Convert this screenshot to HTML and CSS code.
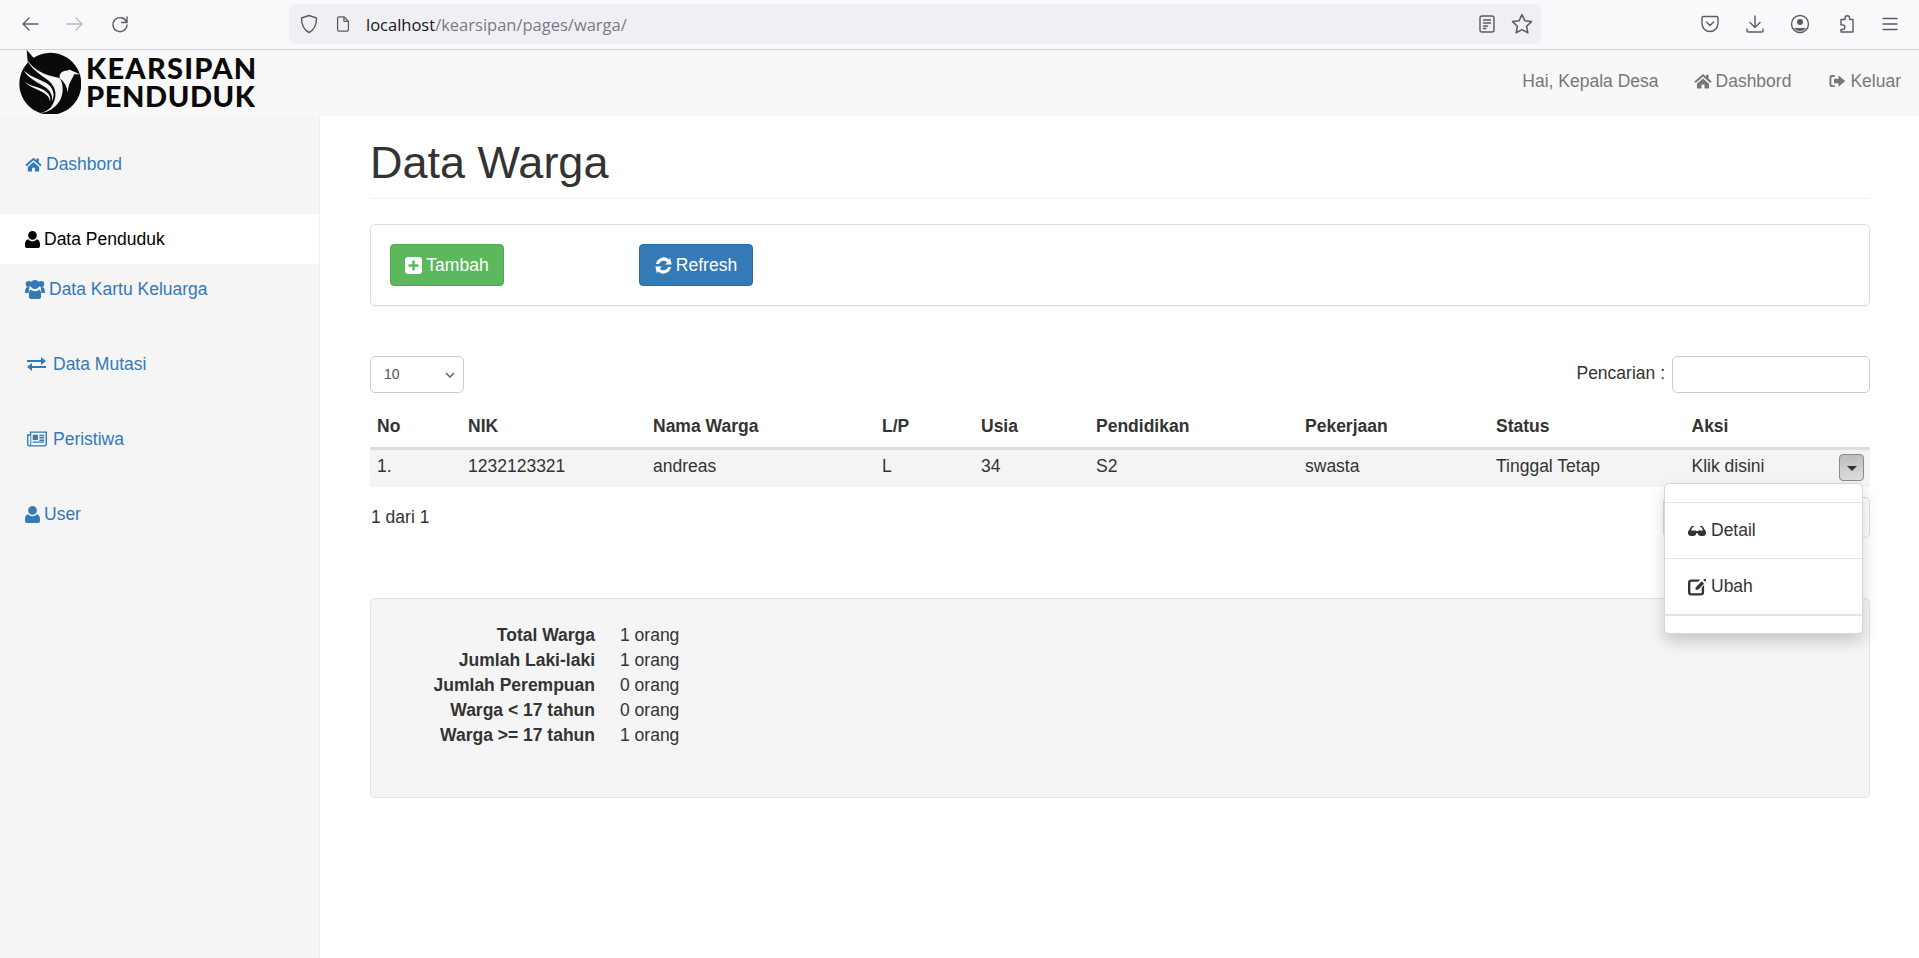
FILE: index.html
```html
<!DOCTYPE html>
<html lang="id">
<head>
<meta charset="utf-8">
<title>Data Warga</title>
<link rel="stylesheet" href="styles.css">
</head>
<body>
<div class="chrome">
  <div class="nav-btns">
    <svg class="ci" viewBox="0 0 20 20"><path d="M18 10H3M9 4l-6 6 6 6"/></svg>
    <svg class="ci dim" viewBox="0 0 20 20"><path d="M2 10h15M11 4l6 6-6 6"/></svg>
    <svg class="ci" viewBox="0 0 20 20"><path d="M16.500 8A7 7 0 1 0 17 11M17 3v5.500h-5.500"/></svg>
  </div>
  <div class="urlbar">
    <svg class="ci shield" viewBox="0 0 20 20"><path d="M10 1.500l7.500 2.500c0 7-1.500 11.500-7.500 14.500C4 15.500 2.500 11 2.500 4z"/></svg>
    <svg class="ci pageic" viewBox="0 0 20 20"><path d="M4 3.500A1.500 1.500 0 0 1 5.500 2H11l5 5v9.500a1.500 1.500 0 0 1-1.500 1.500h-9A1.500 1.500 0 0 1 4 16.500zM11 2v5h5"/></svg>
    <div class="url"><span class="host">localhost</span>/kearsipan/pages/warga/</div>
    <svg class="ci reader" viewBox="0 0 20 20"><rect x="3" y="2" width="14" height="16" rx="2"/><path d="M6.500 6h7M6.500 9h7M6.500 12h4M6.500 14.500h2.500"/></svg>
    <svg class="ci star" viewBox="0 0 20 20"><path d="M10 1.500l2.600 5.500 6 .8-4.400 4.200 1.100 6L10 15.100 4.700 18l1.100-6L1.400 7.800l6-.8z"/></svg>
  </div>
  <div class="tools">
    <svg class="ci" viewBox="0 0 20 20"><path d="M3.500 2.500h13A1.500 1.500 0 0 1 18 4v5.500a8 8 0 0 1-16 0V4a1.500 1.500 0 0 1 1.500-1.500zM6.500 8l3.500 3.500L13.500 8"/></svg>
    <svg class="ci" viewBox="0 0 20 20"><path d="M10 2v11M5 8.500l5 5 5-5M2 15v2a1 1 0 0 0 1 1h14a1 1 0 0 0 1-1v-2"/></svg>
    <svg class="ci" viewBox="0 0 20 20"><circle cx="10" cy="10" r="8.500"/><circle class="fill" cx="10" cy="8" r="3"/><path class="fill" d="M4 14h12a7.500 7.500 0 0 1-12 0z"/></svg>
    <svg class="ci" viewBox="0 0 20 20"><path d="M10 5.500V4a2.300 2.300 0 0 1 4.600 0v1.500H18V18H6v-2.500h1.500a2.300 2.300 0 0 0 0-4.600H6V5.500z"/></svg>
    <svg class="ci" viewBox="0 0 20 20"><path d="M3 4.500h14M3 10h14M3 15.500h14"/></svg>
  </div>
</div>

<header class="navbar">
  <div class="brand">
    <svg class="logo" viewBox="0 0 64 66">
      <path class="k" d="M8 0L15 8A32 32 0 1 1 9 13z"/>
      <path class="w" d="M8 9C12 20 22 25 31 32c8 7 9 17 2 27-3 3-7 5-11 6 13-1 24-12 23-26 0-4-1-7-3-10C34 27 16 24 8 9z"/>
      <path class="w" d="M5 21c5 9 15 12 23 18 5 4 7 9 6 14 3-6 2-12-3-17C24 30 13 29 5 21z"/>
      <path class="w" d="M6 33c6 6 15 8 21 12 4 3 5 6 5 9 1-4 0-8-4-11-6-5-15-5-22-10z"/>
      <path class="w" d="M42 29c-1-5 3-8 8-8 2-1 3-1 4 0l9 4-6 0c-1 3-3 5-4 8-2 3-2 7-3 11 0-6-3-11-8-15z"/>
    </svg>
    <div class="brand-text"><span class="line-a">KEARSIPAN</span><span class="line-b">PENDUDUK</span></div>
  </div>
  <nav class="topnav">
    <span class="hai">Hai, Kepala Desa</span>
    <a class="toplink dash">
      <svg class="ic w18" viewBox="0 0 24 24"><path d="M12 2.500L.5 12.500l1.800 2L12 6l9.700 8.500 1.800-2-4-3.500V3.500h-3.500V6zM4 15.500V22h6v-5.500h4V22h6v-6.500L12 8.500z"/></svg>Dashbord</a>
    <a class="toplink">
      <svg class="ic w18" viewBox="0 0 24 24"><path d="M9 4H5a3 3 0 0 0-3 3v10a3 3 0 0 0 3 3h4v-2.500H5.500a1 1 0 0 1-1-1v-9a1 1 0 0 1 1-1H9zM14 4.500L23 12l-9 7.500V15H8V9h6z"/></svg>Keluar</a>
  </nav>
</header>

<div class="layout">
  <aside class="sidebar">
    <a class="side-item gap">
      <svg class="ic w17" viewBox="0 0 24 24"><path d="M12 2.500L.5 12.500l1.800 2L12 6l9.700 8.500 1.800-2-4-3.500V3.500h-3.500V6zM4 15.500V22h6v-5.500h4V22h6v-6.500L12 8.500z"/></svg>Dashbord</a>
    <a class="side-item active">
      <svg class="ic p15" viewBox="0 0 16 18"><path d="M8 0a4.600 4.600 0 1 0 0 9.200A4.600 4.600 0 0 0 8 0zM3.600 8.600C1.300 8.800 0 10.800 0 14v2a2 2 0 0 0 2 2h12a2 2 0 0 0 2-2v-2c0-3.200-1.300-5.200-3.600-5.400C11.300 10 9.700 10.800 8 10.800s-3.300-.8-4.400-2.200z"/></svg>Data Penduduk</a>
    <a class="side-item gap">
      <svg class="ic g20" viewBox="0 0 20 20"><circle cx="3.700" cy="5" r="3"/><circle cx="16.300" cy="5" r="3"/><circle cx="10" cy="5.500" r="4.500"/><path d="M0 13.500c0-3.500 1-5.500 3-5.500.6 0 1 .2 1.500.5-.5 1-.7 2.300-.7 3.500v2H1a1 1 0 0 1-1-.5zM20 13.500c0-3.500-1-5.500-3-5.500-.6 0-1 .2-1.500.5.500 1 .7 2.300.7 3.500v2h3a1 1 0 0 0 1-.5zM5.500 10.500c1 1 2.800 1.700 4.500 1.700s3.500-.7 4.500-1.700c1.200 1 1.500 2.500 1.500 4.500v3a2 2 0 0 1-2 2H6a2 2 0 0 1-2-2v-3c0-2 .3-3.500 1.500-4.500z"/></svg>Data Kartu Keluarga</a>
    <a class="side-item gap">
      <svg class="ic w19 ml2 mr7" viewBox="0 0 19 14"><path d="M0 3h14V0l5 4-5 4V5H0zM19 9H5V6L0 10l5 4v-3h14z"/></svg>Data Mutasi</a>
    <a class="side-item gap">
      <svg class="ic w20 ml2 mr6" viewBox="0 0 21 16"><path fill-rule="evenodd" d="M3 0h18v13.500a2.500 2.500 0 0 1-2.500 2.500h-16A2.500 2.500 0 0 1 0 13.500V3h3zM4.500 1.500v12a2 2 0 0 1-.3 1h14.300a1 1 0 0 0 1-1v-12zM1.500 4.500v9a1 1 0 0 0 2 0v-9zM6 3.500h5.500V9H6zM13 3.500h5V5h-5zM13 6h5v1.500h-5zM13 8.500h5V10h-5zM6 10.500h12V12H6z"/></svg>Peristiwa</a>
    <a class="side-item">
      <svg class="ic p15" viewBox="0 0 16 18"><path d="M8 0a4.600 4.600 0 1 0 0 9.200A4.600 4.600 0 0 0 8 0zM3.600 8.600C1.300 8.800 0 10.800 0 14v2a2 2 0 0 0 2 2h12a2 2 0 0 0 2-2v-2c0-3.200-1.300-5.200-3.600-5.400C11.300 10 9.700 10.800 8 10.800s-3.300-.8-4.400-2.200z"/></svg>User</a>
  </aside>

  <main class="main">
    <h1 class="title">Data Warga</h1>
    <section class="panel">
      <button class="btn green">
        <svg class="ic w17" viewBox="0 0 17 17"><path fill-rule="evenodd" d="M3 0h11a3 3 0 0 1 3 3v11a3 3 0 0 1-3 3H3a3 3 0 0 1-3-3V3a3 3 0 0 1 3-3zM7.300 3.500v3.800H3.500v2.400h3.800v3.800h2.400V9.700h3.800V7.300H9.700V3.500z"/></svg>Tambah</button>
      <button class="btn blue">
        <svg class="ic w17" viewBox="0 0 17 17"><path d="M15 .5l1.700 7H10l2.300-2.300A5 5 0 0 0 4 7H1A7.900 7.900 0 0 1 14 2.400zM2 16.500L.3 9.500H7l-2.300 2.300A5 5 0 0 0 13 10h3A7.900 7.900 0 0 1 3 14.600z"/></svg>Refresh</button>
    </section>

    <div class="controls">
      <div class="select"><span>10</span><svg class="chev" viewBox="0 0 10 6"><path d="M1 1l4 4 4-4"/></svg></div>
      <label class="search"><span class="search-label">Pencarian :</span><span class="input"></span></label>
    </div>

    <table class="table">
      <colgroup>
        <col class="c1"><col class="c2"><col class="c3"><col class="c4"><col class="c5"><col class="c6"><col class="c7"><col class="c8"><col class="c9">
      </colgroup>
      <thead>
        <tr><th>No</th><th>NIK</th><th>Nama Warga</th><th>L/P</th><th>Usia</th><th>Pendidikan</th><th>Pekerjaan</th><th>Status</th><th>Aksi</th></tr>
      </thead>
      <tbody>
        <tr>
          <td>1.</td><td>1232123321</td><td>andreas</td><td>L</td><td>34</td><td>S2</td><td>swasta</td><td>Tinggal Tetap</td>
          <td class="aksi">
            <div class="aksi-row">
              <span>Klik disini</span>
              <div class="dd">
                <button class="caret-btn"><span class="caret"></span></button>
                <div class="menu">
                  <div class="menu-sep first"></div>
                  <a class="menu-item">
                    <svg class="ic m18" viewBox="0 0 22 12"><path d="M5 0h2v1.500H5.500L3.500 5.500H9c.6 0 1.100.3 1.400.7.300-.1.900-.1 1.200 0 .3-.4.800-.7 1.400-.7h5.500l-2-4H15V0h2c.5 0 .8.200 1 .6L22 7v1a4 4 0 0 1-4 4h-2.500a4 4 0 0 1-3.800-3.300c-.4-.2-1-.2-1.400 0A4 4 0 0 1 6.500 12H4a4 4 0 0 1-4-4V7L4 .6C4.200.2 4.500 0 5 0z"/><path d="M1.500 7h8.500v1.500a2.500 2.500 0 0 1-2.500 2.500h-3.500a2.500 2.500 0 0 1-2.500-2.500zM12 7h8.500v1.500a2.500 2.500 0 0 1-2.500 2.500h-3.500A2.500 2.500 0 0 1 12 8.500z"/></svg>Detail</a>
                  <div class="menu-sep"></div>
                  <a class="menu-item">
                    <svg class="ic m18" viewBox="0 0 19 18"><path d="M3.500 1H13l-2.500 2.500h-7a1 1 0 0 0-1 1v10a1 1 0 0 0 1 1h10a1 1 0 0 0 1-1V9.500L17 7v7.500a3.500 3.500 0 0 1-3.500 3.500h-10A3.500 3.500 0 0 1 0 14.500v-10A3.500 3.500 0 0 1 3.500 1zM14.500 3l2.500 2.500-6.500 6.500H8V9.500zM16 1.500l1-1a1 1 0 0 1 1.300 0l.7.700a1 1 0 0 1 0 1.300l-1 1z"/></svg>Ubah</a>
                  <div class="menu-sep thick"></div>
                </div>
              </div>
            </div>
          </td>
        </tr>
      </tbody>
    </table>

    <div class="footer-row">
      <span class="count">1 dari 1</span>
      <div class="pager"></div>
    </div>

    <section class="well">
      <dl class="stats">
        <dt>Total Warga</dt><dd>1 orang</dd>
        <dt>Jumlah Laki-laki</dt><dd>1 orang</dd>
        <dt>Jumlah Perempuan</dt><dd>0 orang</dd>
        <dt>Warga &lt; 17 tahun</dt><dd>0 orang</dd>
        <dt>Warga &gt;= 17 tahun</dt><dd>1 orang</dd>
      </dl>
    </section>
  </main>
</div>
</body>
</html>
```
FILE: styles.css
```css
* { box-sizing: border-box; }
html, body { margin: 0; height: 100%; }
body {
  height: 958px;
  overflow: hidden;
  display: flex;
  flex-direction: column;
  font-family: "Liberation Sans", Arial, sans-serif;
  font-size: 17.5px;
  line-height: 25px;
  color: #333;
  background: #fff;
}

/* browser chrome */
.chrome {
  height: 50px;
  flex: none;
  display: flex;
  align-items: center;
  background: #f9f9fb;
  border-bottom: 1px solid #cfcfd8;
  padding-bottom: 1px;
}
.ci {
  width: 20px;
  height: 20px;
  fill: none;
  stroke: #5b5b66;
  stroke-width: 1.4;
  stroke-linecap: round;
  stroke-linejoin: round;
  flex: none;
}
.ci .fill { fill: #5b5b66; stroke: none; }
.ci.dim { stroke: #b9b9c0; }
.nav-btns { display: flex; gap: 25px; padding-left: 20px; width: 289px; }
.urlbar {
  width: 1252px;
  height: 40px;
  display: flex;
  align-items: center;
  background: #f0f0f4;
  border-radius: 6px;
  padding-left: 10px;
}
.pageic { margin-left: 15px; margin-right: 14px; width: 18px; }
.url {
  flex: 1;
  font-family: "Open Sans", sans-serif;
  font-size: 16.5px;
  color: #7a7a84;
}
.host { color: #15141a; }
.reader { margin-right: 14px; }
.star { margin-right: 8px; width: 22px; height: 22px; }
.tools { display: flex; gap: 25px; padding-left: 159px; }

/* navbar */
.navbar {
  height: 66px;
  flex: none;
  display: flex;
  align-items: center;
  justify-content: space-between;
  background: #f8f8f8;
  padding: 0 18px 0 19px;
}
.brand { display: flex; align-items: center; gap: 5px; height: 66px; }
.logo { width: 62px; height: 64px; flex: none; margin-bottom: 3px; }
.logo .k { fill: #0a0a0a; }
.logo .w { fill: #f5f5f5; }
.brand-text {
  display: flex;
  flex-direction: column;
  margin-bottom: 3px;
  font-family: "Lato", sans-serif;
  font-weight: 900;
  font-size: 29px;
  line-height: 28px;
  color: #0a0a0a;
}
.line-a { letter-spacing: 1.25px; }
.line-b { letter-spacing: 0.6px; }
.topnav { display: flex; align-items: center; color: #777; padding-bottom: 4px; }
.hai { margin-right: 35px; }
.toplink { display: flex; align-items: center; color: #777; }
.toplink.dash { margin-right: 37px; }

.ic { flex: none; fill: currentColor; height: 18px; margin-right: 4px; }
.w17 { width: 17px; height: 17px; }
.w18 { width: 18px; }
.w19 { width: 19px; }
.w20 { width: 20px; }
.p15 { width: 15px; height: 17px; }
.g20 { width: 20px; height: 20px; }
.m18 { width: 18px; height: 18px; }
.ml2 { margin-left: 2px; }
.mr6 { margin-right: 6px; }
.mr7 { margin-right: 7px; }

/* layout */
.layout { flex: 1; display: flex; min-height: 0; }
.sidebar {
  width: 320px;
  flex: none;
  background: #f5f5f5;
  border-right: 1px solid #eee;
  padding-top: 23px;
  display: flex;
  flex-direction: column;
}
.side-item {
  height: 50px;
  display: flex;
  align-items: center;
  padding-left: 25px;
  color: #337ab7;
}
.side-item.gap { margin-bottom: 25px; }
.side-item.active { background: #fff; color: #000; }

.main { flex: 1; padding: 22px 49px 0 50px; min-width: 0; }
.title {
  margin: 0 0 25px;
  padding-bottom: 10px;
  border-bottom: 1px solid #eee;
  font-size: 45px;
  font-weight: 400;
  line-height: 50px;
  color: #333;
}
.panel {
  height: 82px;
  border: 1px solid #ddd;
  border-radius: 5px;
  padding: 19px;
  display: flex;
  gap: 135px;
  box-shadow: 0 1px 1px rgba(0,0,0,.05);
}
.btn {
  width: 114px;
  height: 42px;
  display: flex;
  align-items: center;
  justify-content: center;
  font: inherit;
  color: #fff;
  border: 1px solid;
  border-radius: 4px;
  padding: 0;
}
.green { background: #5cb85c; border-color: #4cae4c; }
.blue { background: #337ab7; border-color: #2e6da4; }

.controls {
  margin-top: 50px;
  display: flex;
  justify-content: space-between;
  align-items: center;
}
.select {
  width: 94px;
  height: 37px;
  border: 1px solid #ccc;
  border-radius: 5px;
  display: flex;
  align-items: center;
  justify-content: space-between;
  padding: 0 8px 0 13px;
  font-size: 14px;
  color: #555;
}
.chev { width: 10px; height: 6px; fill: none; stroke: #555; stroke-width: 1.3; }
.search { display: flex; align-items: center; gap: 7px; }
.search-label { padding-bottom: 2px; }
.input {
  width: 198px;
  height: 37px;
  border: 1px solid #ccc;
  border-radius: 5px;
  background: #fff;
}

.table { width: 100%; border-collapse: collapse; table-layout: fixed; }
.c1 { width: 91px; }
.c2 { width: 185px; }
.c3 { width: 229px; }
.c4 { width: 99px; }
.c5 { width: 115px; }
.c6 { width: 209px; }
.c7 { width: 191px; }
.c8 { width: 195.5px; }
.c9 { width: 185.5px; }
.table th {
  height: 55px;
  padding: 0 7px 8px;
  vertical-align: bottom;
  text-align: left;
  font-weight: 700;
  border-bottom: 3px solid #ddd;
}
.table td { height: 39px; padding: 0 7px 3px; background: #f4f4f4; }
.table td.aksi { padding: 0 6px 2px 7px; }
.aksi-row { display: flex; align-items: center; justify-content: space-between; }
.aksi-row > span { padding-bottom: 1px; }
.dd { position: relative; height: 27px; }
.caret-btn {
  display: block;
  width: 25px;
  height: 27px;
  padding: 0;
  border: 1px solid #8c8c8c;
  border-radius: 4px;
  background: linear-gradient(#bdbdbd, #dcdcdc);
}
.caret {
  display: block;
  width: 0;
  margin: 2px auto 0;
  border-top: 5px solid #333;
  border-left: 5px solid transparent;
  border-right: 5px solid transparent;
}
.menu {
  position: absolute;
  z-index: 5;
  top: 29px;
  right: 1px;
  width: 199px;
  height: 151px;
  background: #fff;
  border: 1px solid #d5d5d5;
  border-radius: 5px;
  box-shadow: 0 8px 15px rgba(0,0,0,.175);
  padding-top: 18px;
}
.menu-sep { height: 1px; background: #e5e5e5; }
.menu-sep.thick { height: 2px; }
.menu-item { height: 55px; display: flex; align-items: center; padding: 1px 0 0 23px; color: #333; }
.menu-item .ic { margin-right: 5px; }

.footer-row {
  margin-top: 10px;
  height: 41px;
  display: flex;
  justify-content: space-between;
  align-items: flex-start;
}
.count { padding-left: 1px; line-height: 40px; }
.pager { width: 207px; height: 41px; border: 1px solid #ddd; border-radius: 5px; }

.well {
  margin-top: 60px;
  height: 200px;
  background: #f5f5f5;
  border: 1px solid #e3e3e3;
  border-radius: 5px;
  padding-top: 24px;
}
.stats {
  margin: 0;
  display: grid;
  grid-template-columns: 224px auto;
  column-gap: 25px;
  justify-content: start;
}
.stats dt { text-align: right; font-weight: 700; }
.stats dd { margin: 0; }
```
